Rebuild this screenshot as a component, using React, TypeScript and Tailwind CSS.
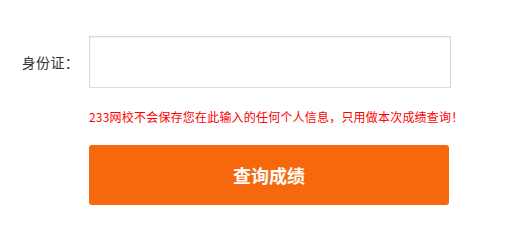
export default function App() {
  return (
    <div
      className="w-[531px] h-[215px] bg-white pt-[36px]"
      style={{ fontFamily: '"Microsoft YaHei", "Noto Sans CJK SC", sans-serif' }}
    >
      <div className="flex items-center">
        <label className="w-[89px] pr-[10px] text-right text-[14px] text-[#333] tracking-[0.3px]">身份证：</label>
        <input
          type="text"
          className="w-[362px] h-[52px] border border-[#d9d9d9] bg-white outline-none shadow-[inset_0_1px_2px_rgba(0,0,0,0.06)] px-3"
        />
      </div>
      <p className="ml-[89px] mt-[20px] h-[18px] text-[12px] leading-[18px] text-[#f00] whitespace-nowrap tracking-[0.2px]">
        233网校不会保存您在此输入的任何个人信息，只用做本次成绩查询！
      </p>
      <button className="ml-[89px] mt-[19px] w-[360px] h-[60px] rounded-[3px] bg-[#f5680d] text-white text-[18px] font-bold">
        查询成绩
      </button>
    </div>
  );
}
